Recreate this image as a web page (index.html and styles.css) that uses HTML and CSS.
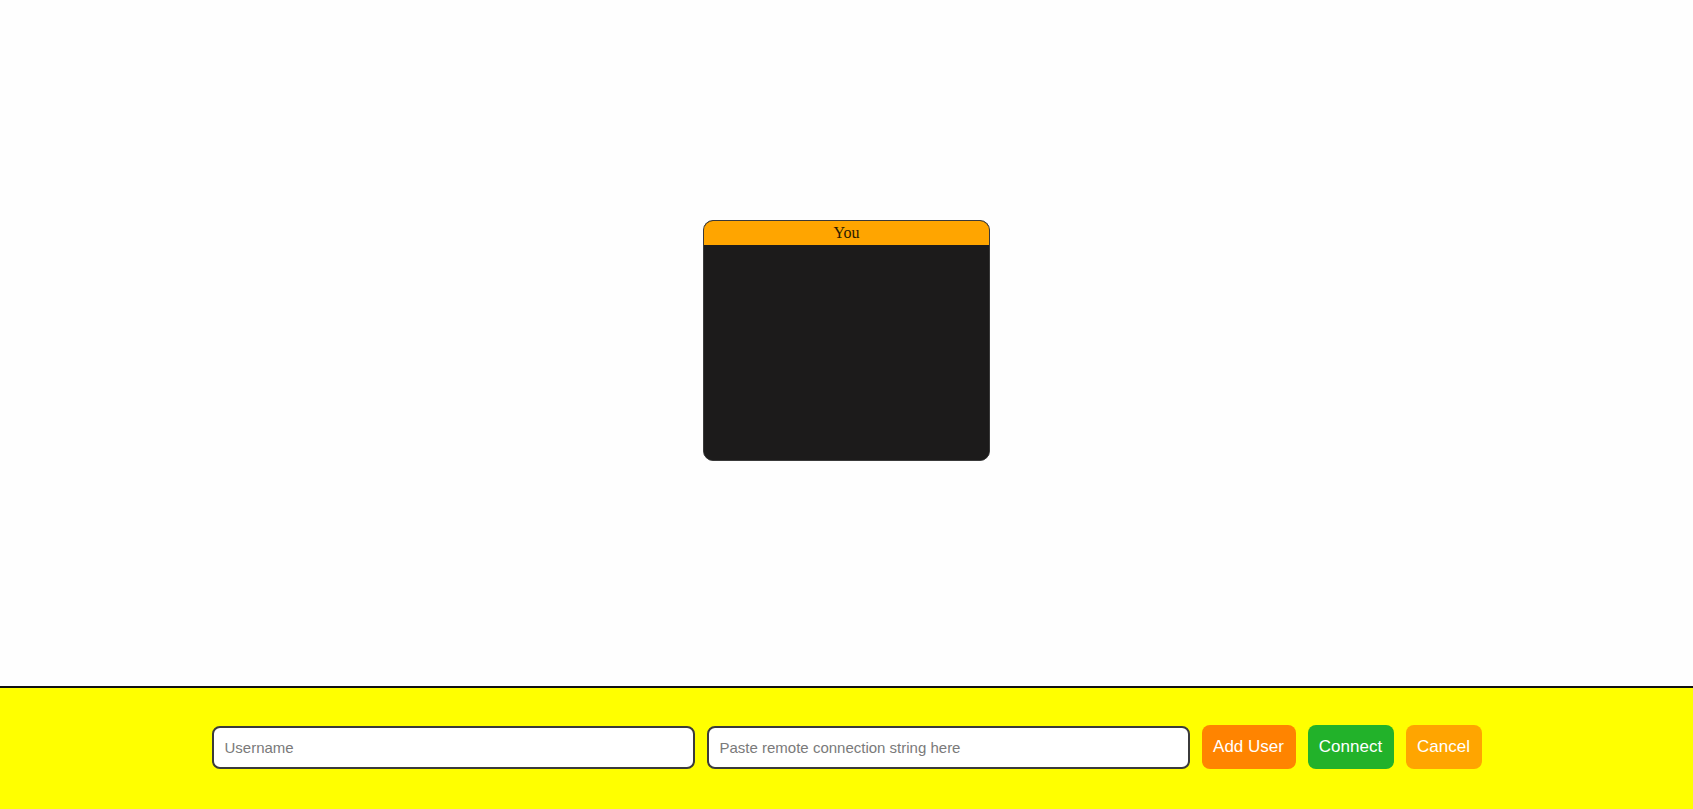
FILE: index.html
```html
<!DOCTYPE html>
<html>
<head>
<meta charset="utf-8">
<link rel="stylesheet" href="styles.css">
</head>
<body>
<div class="app">
  <main class="stage">
    <div class="tile">
      <div class="tile-label">You</div>
      <div class="tile-video"></div>
    </div>
  </main>
  <footer class="controls">
    <input class="field" type="text" placeholder="Username">
    <input class="field" type="text" placeholder="Paste remote connection string here">
    <button class="btn btn-add">Add User</button>
    <button class="btn btn-connect">Connect</button>
    <button class="btn btn-cancel">Cancel</button>
  </footer>
</div>
</body>
</html>
```
FILE: styles.css
```css
html, body {
  margin: 0;
  padding: 0;
  height: 100%;
  background: #fefefe;
}
.app {
  display: flex;
  flex-direction: column;
  height: 100vh;
}
.stage {
  flex: 1;
  display: flex;
  justify-content: center;
  align-items: center;
  padding-bottom: 6px;
}
.tile {
  width: 287px;
  height: 241px;
  box-sizing: border-box;
  border: 1px solid #3a3a3a;
  border-radius: 10px;
  overflow: hidden;
  display: flex;
  flex-direction: column;
  background: #1c1b1b;
}
.tile-label {
  background: #ffa500;
  color: #2a1a00;
  font-family: "Liberation Serif", serif;
  font-size: 16px;
  text-align: center;
  height: 24px;
  line-height: 24px;
  border-bottom: 1px solid #1c1b1b;
}
.tile-video {
  flex: 1;
  background: #1c1b1b;
}
.controls {
  height: 123px;
  box-sizing: border-box;
  padding-bottom: 3px;
  border-top: 2px solid #111;
  background: #ffff00;
  display: flex;
  justify-content: center;
  align-items: center;
  gap: 12px;
}
.field {
  width: 483px;
  height: 43px;
  box-sizing: border-box;
  border: 2px solid #3b3b3b;
  border-radius: 8px;
  padding: 0 11px;
  font-family: "Liberation Sans", Arial, sans-serif;
  font-size: 15px;
  background: #fff;
  outline: none;
}
.field::placeholder {
  color: #7a7a7a;
}
.btn {
  height: 44px;
  border: none;
  border-radius: 8px;
  color: #fff;
  font-family: "Liberation Sans", Arial, sans-serif;
  font-size: 17px;
  padding: 0 11px;
  cursor: pointer;
}
.btn-add {
  width: 94px;
  background: #ff8400;
}
.btn-connect {
  width: 86px;
  background: #22b22a;
}
.btn-cancel {
  width: 76px;
  background: #ffa500;
}
```
